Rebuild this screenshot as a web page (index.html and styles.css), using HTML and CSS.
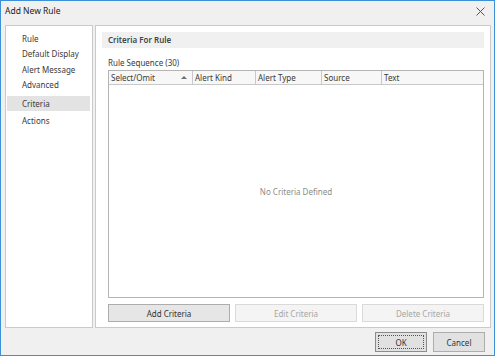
FILE: index.html
```html
<!DOCTYPE html>
<html lang="en">
<head>
  <meta charset="UTF-8" />
  <title>Add New Rule</title>
  <link rel="stylesheet" href="styles.css">
</head>
<body>
  <div class="window">
    <div class="titlebar">
      <span class="title">Add New Rule</span>
      <svg class="close" width="9" height="9" viewBox="0 0 9 9">
        <path d="M0.5 0.5 L8.5 8.5 M8.5 0.5 L0.5 8.5" stroke="#555" stroke-width="1" fill="none"/>
      </svg>
    </div>

    <div class="main">
      <!-- Left navigation -->
      <ul class="nav">
        <li>Rule</li>
        <li>Default Display</li>
        <li>Alert Message</li>
        <li>Advanced</li>
        <li class="active">Criteria</li>
        <li>Actions</li>
      </ul>

      <!-- Criteria page -->
      <div class="page">
        <div class="band">Criteria For Rule</div>
        <div class="section">
          <div class="seq-label">Rule Sequence (30)</div>
          <div class="grid">
            <div class="grid-head">
              <div class="col sorted">Select/Omit <span class="sort-arrow"></span></div>
              <div class="col">Alert Kind</div>
              <div class="col">Alert Type</div>
              <div class="col">Source</div>
              <div class="col">Text</div>
            </div>
            <div class="grid-body">
              <span class="empty">No Criteria Defined</span>
            </div>
          </div>
          <div class="actions">
            <button class="btn">Add Criteria</button>
            <button class="btn" disabled>Edit Criteria</button>
            <button class="btn" disabled>Delete Criteria</button>
          </div>
        </div>
      </div>
    </div>

    <div class="footer">
      <button class="btn default"><span class="focus">OK</span></button>
      <button class="btn">Cancel</button>
    </div>
  </div>
</body>
</html>
```

FILE: styles.css
```css
* {
  margin: 0;
  padding: 0;
  box-sizing: border-box;
}

body {
  font-family: 'Noto Sans', 'Open Sans', sans-serif;
  font-size: 8px;
  color: #3a3a3a;
  background: #f0f0f0;
}

.window {
  width: 495px;
  height: 356px;
  border: 1px solid #3c8fd8;
  background: #f0f0f0;
  display: flex;
  flex-direction: column;
}

.titlebar {
  height: 24px;
  display: flex;
  align-items: flex-start;
  justify-content: space-between;
  padding: 3px 9px 0 4px;
}

.title {
  font-size: 8.5px;
  line-height: 13px;
  color: #222;
}

.close {
  margin-top: 3px;
}

.main {
  height: 303px;
  display: flex;
  gap: 2px;
  padding: 0 3px 0 4px;
}

.nav {
  list-style: none;
  width: 88px;
  background: #fff;
  border: 1px solid #cacaca;
  padding: 5px 2px 0 1px;
}

.nav li {
  height: 15.4px;
  line-height: 15.4px;
  padding-left: 15px;
}

.nav li.active {
  height: 15px;
  line-height: 15px;
  margin: 3px 0 2px;
  background: #e3e3e3;
}

.page {
  flex: 1;
  background: #fff;
  border: 1px solid #cacaca;
  padding: 6px 6px 5px 6px;
  display: flex;
  flex-direction: column;
}

.band {
  height: 16px;
  line-height: 16px;
  padding-left: 6px;
  background: #f0f0f0;
  font-weight: 600;
  color: #444;
}

.section {
  flex: 1;
  padding-left: 6px;
  display: flex;
  flex-direction: column;
}

.seq-label {
  margin-top: 8px;
  height: 14px;
  line-height: 14px;
}

.grid {
  flex: 1;
  border: 1px solid #b4b4b4;
  display: flex;
  flex-direction: column;
}

.grid-head {
  height: 14px;
  display: grid;
  grid-template-columns: 84px 63px 66px 60px 1fr;
  background: #f7f7f7;
  border-bottom: 1px solid #c8c8c8;
}

.col {
  line-height: 13px;
  padding-left: 2px;
  border-right: 1px solid #c8c8c8;
  display: flex;
  align-items: center;
  justify-content: space-between;
}

.col:last-child {
  border-right: none;
}

.sort-arrow {
  width: 0;
  height: 0;
  margin-right: 5px;
  border-left: 3px solid transparent;
  border-right: 3px solid transparent;
  border-bottom: 3px solid #707070;
}

.grid-body {
  flex: 1;
  display: flex;
  align-items: center;
  justify-content: center;
  background: #fff;
}

.empty {
  color: #8c8c8c;
}

.actions {
  margin-top: 6px;
  display: grid;
  grid-template-columns: 1fr 1fr 1fr;
  gap: 5px;
}

.btn {
  height: 18px;
  font-family: inherit;
  font-size: 8px;
  color: #333;
  background: #e6e6e6;
  border: 1px solid #adadad;
}

.btn:disabled {
  color: #a6a6a6;
  background: #f4f4f4;
  border-color: #dadada;
}

.footer {
  flex: 1;
  display: flex;
  justify-content: flex-end;
  gap: 6px;
  padding: 4px 9px 0 0;
}

.footer .btn {
  width: 52px;
  height: 20px;
  background: #e1e1e1;
}

.footer .btn.default {
  border-color: #8c8c8c;
  padding: 2px;
}

.focus {
  display: block;
  height: 100%;
  line-height: 14px;
  border: 1px dotted #555;
}
```
